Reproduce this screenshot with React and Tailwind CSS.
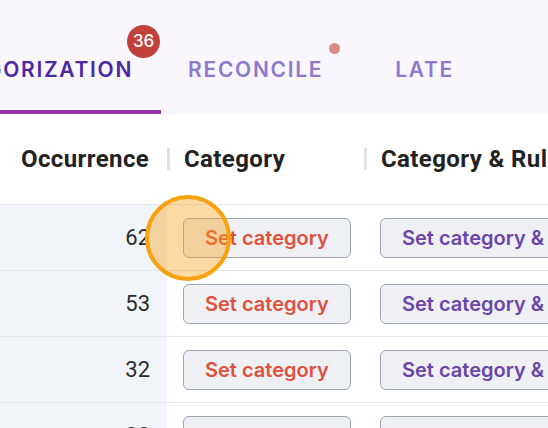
const rows = [62, 53, 32, 28];

function Tab({ label, active, children, className = "" }) {
  return (
    <div
      className={`relative flex items-center h-full ${className} ${
        active ? "text-[#4b2aa0]" : "text-[#8f79cc]"
      }`}
    >
      <span className="text-[21px] font-semibold tracking-[1.7px]">{label}</span>
      {children}
      {active && (
        <div className="absolute left-[-40px] right-[-28px] bottom-0 h-[4px] bg-[#8e3aae]" />
      )}
    </div>
  );
}

export default function App() {
  return (
    <div
      className="relative w-[548px] h-[428px] overflow-hidden bg-white"
      style={{ fontFamily: "Inter, 'Noto Sans', sans-serif" }}
    >
      <div className="h-[114px] bg-[#f9f6fe] flex items-end">
        <div className="h-[114px] flex pt-[26px]">
          <Tab label="CATEGORIZATION" active className="ml-[-76px]">
            <span className="absolute right-[-27px] top-[-1px] w-[33px] h-[33px] rounded-full bg-[#c1413c] text-white text-[17px] font-medium flex items-center justify-center">
              36
            </span>
          </Tab>
          <Tab label="RECONCILE" className="ml-[55px]">
            <span className="absolute right-[-17px] top-[17px] w-[11px] h-[11px] rounded-full bg-[#d98a86]" />
          </Tab>
          <Tab label="LATE" className="ml-[72px]" />
        </div>
      </div>

      <div style={{ fontFamily: "Roboto, 'Liberation Sans', sans-serif" }}>
        <div className="h-[91px] flex items-center border-b border-[#e4e6ea] text-[24px] font-bold text-[#222] tracking-[0.4px]">
          <div className="w-[167px] pl-[21px] shrink-0">Occurrence</div>
          <div className="w-[3px] h-[22px] bg-[#e2e2e2] shrink-0" />
          <div className="w-[194px] pl-[14px] shrink-0">Category</div>
          <div className="w-[3px] h-[22px] bg-[#e2e2e2] shrink-0" />
          <div className="pl-[14px] whitespace-nowrap">Category &amp; Rule</div>
        </div>

        {rows.map((n, i) => (
          <div key={i} className="h-[66px] flex border-b border-[#e4e6ea]">
            <div className="w-[167px] shrink-0 bg-[#f1f5fa] flex items-center justify-end pr-[17px] text-[22px] text-[#2b2b2b]">
              {n}
            </div>
            <div className="w-[197px] shrink-0 flex items-center pl-[16px]">
              <button
                className="w-[168px] h-[40px] rounded-[6px] border border-[#9ba7b5] bg-[#eef0f3] text-left pl-[21px] text-[20px] font-semibold text-[#e0503e] whitespace-nowrap"
                style={{ fontFamily: "Inter, sans-serif" }}
              >
                Set category
              </button>
            </div>
            <div className="flex items-center pl-[16px]">
              <button
                className="w-[260px] h-[40px] rounded-[6px] border border-[#9ba7b5] bg-[#eef0f3] text-left pl-[21px] text-[20px] font-semibold text-[#6c45a9] whitespace-nowrap"
                style={{ fontFamily: "Inter, sans-serif" }}
              >
                Set category &amp; rule
              </button>
            </div>
          </div>
        ))}
      </div>

      <div className="absolute left-[145px] top-[195px] w-[86px] h-[86px] rounded-full border-[4px] border-[#f7a20e] bg-[#f9a01b]/40 pointer-events-none" />
    </div>
  );
}
